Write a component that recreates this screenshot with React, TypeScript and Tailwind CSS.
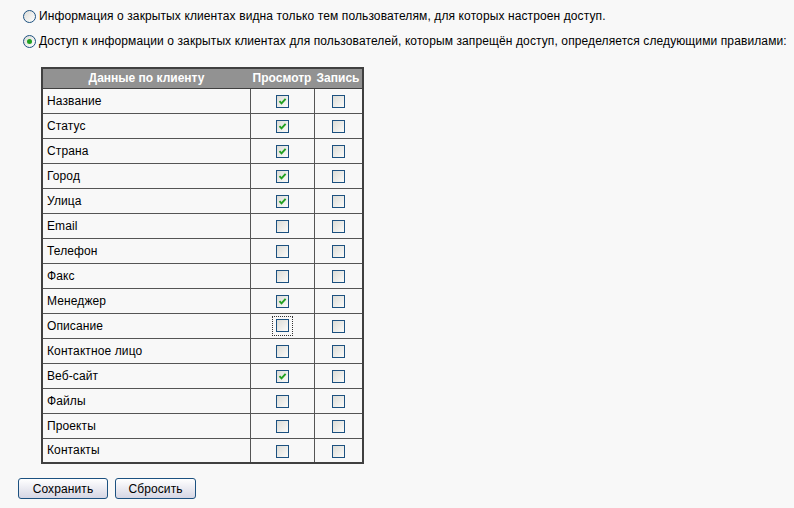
import React from "react";

const rows: [string, boolean][] = [
  ["Название", true],
  ["Статус", true],
  ["Страна", true],
  ["Город", true],
  ["Улица", true],
  ["Email", false],
  ["Телефон", false],
  ["Факс", false],
  ["Менеджер", true],
  ["Описание", false],
  ["Контактное лицо", false],
  ["Веб-сайт", true],
  ["Файлы", false],
  ["Проекты", false],
  ["Контакты", false],
];

function Box({ checked, focus }: { checked?: boolean; focus?: boolean }) {
  const box = (
    <span className="relative inline-block w-[13px] h-[13px] border border-[#1c5180] bg-gradient-to-br from-[#dcdcd7] to-[#fbfbf9] align-middle">
      {checked && (
        <svg className="absolute left-[1px] top-[1px]" width="9" height="9" viewBox="0 0 9 9">
          <path d="M1.5 4.2 L3.5 6.3 L7.6 1.8" stroke="#21a121" strokeWidth="1.9" fill="none" />
        </svg>
      )}
    </span>
  );
  if (focus)
    return (
      <span className="inline-flex items-center justify-center w-[21px] h-[20px] border border-dotted border-[#333] align-middle">
        {box}
      </span>
    );
  return box;
}

export default function App() {
  return (
    <div
      className="w-[794px] h-[508px] bg-[#f8f8f8] text-[12px] text-[#000] overflow-hidden tracking-[0.11px]"
      style={{ fontFamily: "'Liberation Sans', Arial, sans-serif" }}
    >
      <div className="pt-[9px] pl-[23px]">
        <div className="flex items-center gap-[3px] h-[14px]">
          <span className="inline-block w-[13px] h-[13px] rounded-full border border-[#1c5180] bg-gradient-to-br from-[#dcdcd7] to-[#ffffff]" />
          <span>Информация о закрытых клиентах видна только тем пользователям, для которых настроен доступ.</span>
        </div>
        <div className="flex items-center gap-[3px] h-[14px] mt-[11px]">
          <span className="relative inline-flex items-center justify-center w-[13px] h-[13px] rounded-full border border-[#1c5180] bg-gradient-to-br from-[#dcdcd7] to-[#ffffff]">
            <span className="w-[5px] h-[5px] rounded-full bg-[#21a121]" />
          </span>
          <span>Доступ к информации о закрытых клиентах для пользователей, которым запрещён доступ, определяется следующими правилами:</span>
        </div>
      </div>
      <table className="ml-[41px] mt-[19px] border-collapse border-2 border-[#404040]">
        <thead>
          <tr className="h-[20px] bg-[#929292] text-white font-bold">
            <th className="w-[208px] text-center font-bold border-y border-[#404040] p-0 tracking-normal">Данные по клиенту</th>
            <th className="w-[64px] text-center font-bold border-y border-[#404040] p-0 tracking-normal">Просмотр</th>
            <th className="w-[49px] text-center font-bold border-y border-[#404040] p-0 tracking-normal">Запись</th>
          </tr>
        </thead>
        <tbody>
          {rows.map(([name, v]) => (
            <tr key={name} className="h-[25px]">
              <td className="border border-[#555] pl-[4px] py-0">{name}</td>
              <td className="border border-[#555] text-center p-0">
                <Box checked={v} focus={name === "Описание"} />
              </td>
              <td className="border border-[#555] text-center p-0">
                <Box />
              </td>
            </tr>
          ))}
        </tbody>
      </table>
      <div className="flex gap-[7px] ml-[18px] mt-[14px]">
        <button className="w-[90px] h-[21px] border border-[#1c5180] rounded-[3px] bg-gradient-to-b from-[#ffffff] to-[#d6d6e4] text-[12px]">
          Сохранить
        </button>
        <button className="w-[81px] h-[21px] border border-[#1c5180] rounded-[3px] bg-gradient-to-b from-[#ffffff] to-[#d6d6e4] text-[12px]">
          Сбросить
        </button>
      </div>
    </div>
  );
}
